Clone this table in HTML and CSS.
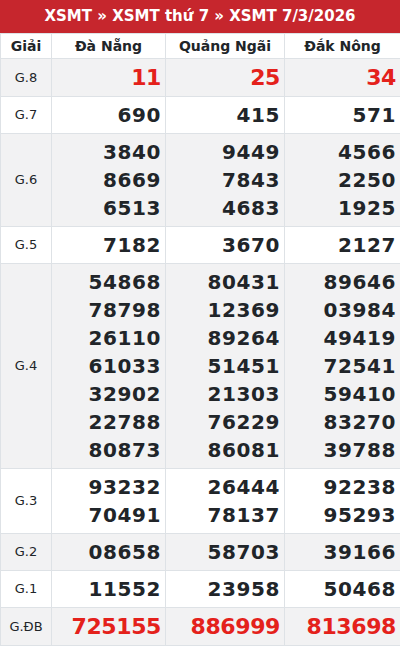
FILE: index.html
```html
<!DOCTYPE html>
<html lang="vi">
<head>
<meta charset="utf-8">
<link rel="stylesheet" href="styles.css">
</head>
<body>
<div class="box">
  <div class="title">XSMT » XSMT thứ 7 » XSMT 7/3/2026</div>
  <table class="kq">
    <colgroup>
      <col class="c0"><col class="c1"><col class="c2"><col class="c3">
    </colgroup>
    <thead>
      <tr><th>Giải</th><th>Đà Nẵng</th><th>Quảng Ngãi</th><th>Đắk Nông</th></tr>
    </thead>
    <tbody>
      <tr class="odd big"><td class="lbl">G.8</td><td class="red">11</td><td class="red">25</td><td class="red">34</td></tr>
      <tr><td class="lbl">G.7</td><td>690</td><td>415</td><td>571</td></tr>
      <tr class="odd"><td class="lbl">G.6</td><td>3840<br>8669<br>6513</td><td>9449<br>7843<br>4683</td><td>4566<br>2250<br>1925</td></tr>
      <tr><td class="lbl">G.5</td><td>7182</td><td>3670</td><td>2127</td></tr>
      <tr class="odd"><td class="lbl">G.4</td><td>54868<br>78798<br>26110<br>61033<br>32902<br>22788<br>80873</td><td>80431<br>12369<br>89264<br>51451<br>21303<br>76229<br>86081</td><td>89646<br>03984<br>49419<br>72541<br>59410<br>83270<br>39788</td></tr>
      <tr><td class="lbl">G.3</td><td>93232<br>70491</td><td>26444<br>78137</td><td>92238<br>95293</td></tr>
      <tr class="odd"><td class="lbl">G.2</td><td>08658</td><td>58703</td><td>39166</td></tr>
      <tr><td class="lbl">G.1</td><td>11552</td><td>23958</td><td>50468</td></tr>
      <tr class="odd big"><td class="lbl">G.ĐB</td><td class="red">725155</td><td class="red">886999</td><td class="red">813698</td></tr>
    </tbody>
  </table>
</div>
</body>
</html>
```
FILE: styles.css
```css
html, body {
  margin: 0;
  padding: 0;
  background: #ffffff;
}
body {
  font-family: "DejaVu Sans", sans-serif;
  color: #212529;
}
.box {
  width: 400px;
}
.title {
  height: 33px;
  line-height: 33px;
  background: #c6262d;
  color: #ffffff;
  font-weight: bold;
  font-size: 15px;
  text-align: center;
}
.kq {
  width: 400px;
  border-collapse: collapse;
  table-layout: fixed;
}
.c0 { width: 51px; }
.c1 { width: 114px; }
.c2 { width: 119px; }
.c3 { width: 116px; }
.kq th, .kq td {
  border: 1px solid #dee2e6;
  padding: 4px 4px;
}
.kq th {
  font-size: 14px;
  line-height: 16px;
  font-weight: bold;
  text-align: center;
}
.kq td {
  font-size: 20px;
  line-height: 28px;
  font-weight: bold;
  text-align: right;
  letter-spacing: 0.6px;
}
.kq td.lbl {
  font-size: 13px;
  font-weight: normal;
  text-align: center;
  letter-spacing: 0;
  color: #212529;
}
.kq tr.odd td {
  background: #f2f2f3;
}
.kq tr.big td {
  line-height: 29px;
}
.kq td.red {
  color: #e4211b;
  font-size: 22px;
  letter-spacing: -0.4px;
}
```
